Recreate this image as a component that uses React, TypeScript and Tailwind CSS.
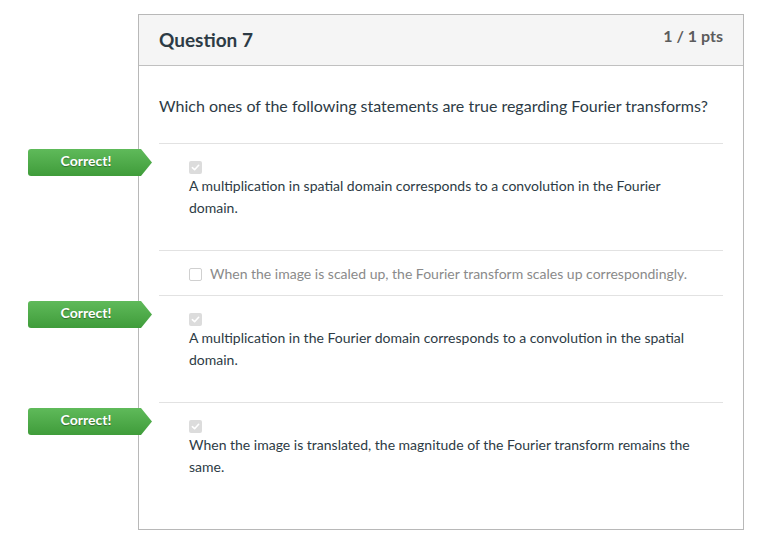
import React from "react";

type Answer = {
  text: string;
  checked: boolean;
  correct: boolean;
};

const answers: Answer[] = [
  {
    text: "A multiplication in spatial domain corresponds to a convolution in the Fourier domain.",
    checked: true,
    correct: true,
  },
  {
    text: "When the image is scaled up, the Fourier transform scales up correspondingly.",
    checked: false,
    correct: false,
  },
  {
    text: "A multiplication in the Fourier domain corresponds to a convolution in the spatial domain.",
    checked: true,
    correct: true,
  },
  {
    text: "When the image is translated, the magnitude of the Fourier transform remains the same.",
    checked: true,
    correct: true,
  },
];

function CorrectBadge() {
  return (
    <div className="absolute left-[-131px] top-[5px] h-[27px] w-[124px] bg-gradient-to-b from-[#5fba5a] to-[#3f9c3a] rounded-l-[3px] [clip-path:polygon(0_0,calc(100%-11px)_0,100%_50%,calc(100%-11px)_100%,0_100%)] flex items-center justify-center pr-[8px] pb-[3px]">
      <span className="text-white font-bold text-[14px] leading-none [text-shadow:0_1px_1px_rgba(0,0,0,0.35)]">
        Correct!
      </span>
    </div>
  );
}

function CheckedBox() {
  return (
    <div className="w-[13px] h-[13px] rounded-[2px] bg-[#dcdcdc] flex items-center justify-center">
      <svg width="9" height="9" viewBox="0 0 10 10" fill="none">
        <path d="M1.5 5.2 L4 7.5 L8.5 2.5" stroke="white" strokeWidth="1.8" strokeLinecap="round" strokeLinejoin="round" />
      </svg>
    </div>
  );
}

export default function App() {
  return (
    <div className="min-h-[547px] bg-white pt-[14px] pl-[138px] font-['Lato','Liberation_Sans',sans-serif]">
      <div className="w-[606px] h-[516px] border border-[#b8b8b8] bg-white">
        {/* Header */}
        <div className="h-[51px] bg-[#f5f5f5] border-b border-[#c0c0c0] flex items-start justify-between pl-[20px] pr-[20px]">
          <h2 className="mt-[12px] text-[19px] font-bold text-[#2d3b45] leading-[26px]">Question 7</h2>
          <div className="mt-[11px] text-[16px] font-bold text-[#5c5c5c] leading-[20px]">1 / 1 pts</div>
        </div>

        {/* Body */}
        <div className="px-[20px]">
          <p className="pt-[28px] pb-[25px] text-[16px] leading-[24px] text-[#2d3b45]">
            Which ones of the following statements are true regarding Fourier transforms?
          </p>

          {answers.map((a, i) =>
            a.checked ? (
              <div key={i} className="relative border-t border-[#e2e2e2] pt-[17px] pb-[31px] pl-[30px] pr-[24px]">
                {a.correct && <CorrectBadge />}
                <CheckedBox />
                <div className="mt-[1px] text-[14px] leading-[22px] text-[#2d3b45]">{a.text}</div>
              </div>
            ) : (
              <div key={i} className="relative border-t border-[#e2e2e2] pt-[12px] pb-[10px] pl-[30px] pr-[24px] flex items-center gap-[8px]">
                <div className="w-[13px] h-[13px] rounded-[2px] border border-[#d0d0d0] bg-white shrink-0" />
                <span className="text-[14px] leading-[22px] text-[#8a8a8a]">{a.text}</span>
              </div>
            )
          )}
        </div>
      </div>
    </div>
  );
}
